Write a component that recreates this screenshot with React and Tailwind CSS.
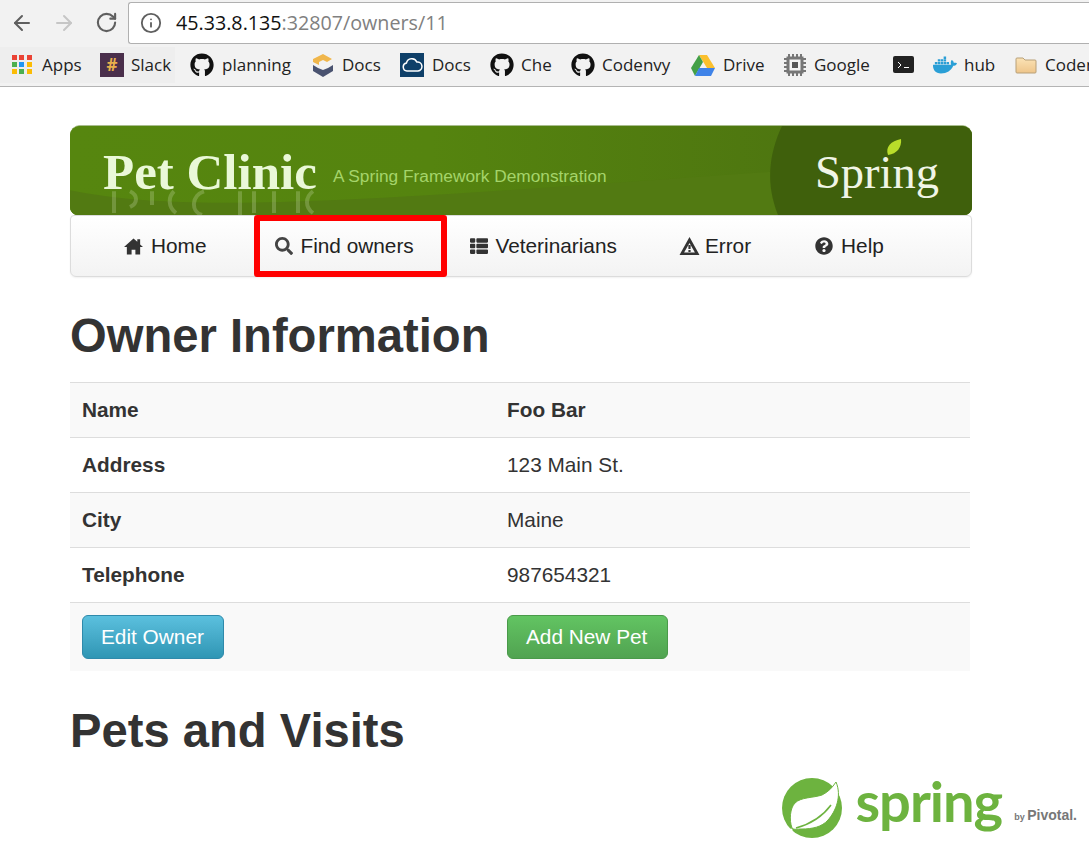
import React from 'react';
import { FaGithub, FaSearch, FaThList, FaQuestionCircle, FaDocker } from 'react-icons/fa';
import { ArrowLeft, ArrowRight, RotateCw, Info } from 'lucide-react';

function AppsIcon() {
  const colors = ['#ea4335', '#ea4335', '#ea4335', '#4caf50', '#2196f3', '#fbbc05', '#fbbc05', '#4caf50', '#fbbc05'];
  return (
    <div className="grid grid-cols-3 gap-[2px] w-[20px] h-[20px]">
      {colors.map((c, i) => <div key={i} className="w-[5px] h-[5px]" style={{ backgroundColor: c }} />)}
    </div>
  );
}

function DocsCube() {
  return (
    <svg width="22" height="24" viewBox="0 0 22 24">
      <path d="M11 1l9 5-5 3-4-2-4 2v3L1 9V6z" fill="#f0b64b" />
      <path d="M1 12l5 3 5 2 5-2 5-3v6l-10 6-10-6z" fill="#4a5370" />
    </svg>
  );
}

function CloudSquare() {
  return (
    <div className="w-[24px] h-[24px] bg-[#0f4069] flex items-center justify-center">
      <svg width="21" height="14" viewBox="0 0 21 14" fill="none" stroke="white" strokeWidth="1.5">
        <path d="M5 13a4 4 0 0 1-.6-7.9A5.5 5.5 0 0 1 14.8 4 4.5 4.5 0 0 1 16 13z" />
      </svg>
    </div>
  );
}

function DriveIcon() {
  return (
    <svg width="24" height="22" viewBox="0 0 24 22">
      <path d="M8 1h8l8 13h-8z" fill="#fbc02d" />
      <path d="M8 1l4 7-8 14-4-8z" fill="#43a047" />
      <path d="M8 14h16l-4 8H4z" fill="#3f83e8" />
    </svg>
  );
}

function ChipIcon() {
  return (
    <svg width="24" height="24" viewBox="0 0 24 24">
      <path d="M6 1v3M10 1v3M14 1v3M18 1v3M6 20v3M10 20v3M14 20v3M18 20v3M1 6h3M1 10h3M1 14h3M1 18h3M20 6h3M20 10h3M20 14h3M20 18h3" stroke="#777" strokeWidth="2" />
      <rect x="5" y="5" width="14" height="14" fill="none" stroke="#777" strokeWidth="3" />
      <rect x="9" y="9" width="6" height="6" fill="#555" />
    </svg>
  );
}

function TerminalIcon() {
  return (
    <div className="w-[21px] h-[17px] bg-[#222] rounded-[2px] flex items-center justify-center">
      <svg width="13" height="8" viewBox="0 0 13 8" fill="none" stroke="white" strokeWidth="1">
        <path d="M1 1l3 3-3 3M7 6.5h5" />
      </svg>
    </div>
  );
}

function FolderIcon() {
  return (
    <svg width="22" height="18" viewBox="0 0 22 18">
      <defs>
        <linearGradient id="folder" x1="0" y1="0" x2="0" y2="1">
          <stop offset="0" stopColor="#fbe3b6" />
          <stop offset="1" stopColor="#eec58a" />
        </linearGradient>
      </defs>
      <path d="M1 3a1 1 0 0 1 1-1h6l2 2h10a1 1 0 0 1 1 1v11a1 1 0 0 1-1 1H2a1 1 0 0 1-1-1z" fill="url(#folder)" stroke="#b8a078" />
    </svg>
  );
}

const gh = <FaGithub className="text-[24px] text-[#111]" />;

const bookmarks = [
  { w: 'w-[100px] pl-[12px]', gap: 'gap-[10px]', icon: <AppsIcon />, label: 'Apps', bg: 'bg-[#eeeeee]' },
  { w: 'w-[75px] mr-[15px]', gap: 'gap-[7px]', icon: <div className="w-[24px] h-[24px] bg-[#4a2f4b] text-[#e8b04c] text-[17px] font-bold leading-[24px] text-center">#</div>, label: 'Slack', bg: 'bg-[#eeeeee]' },
  { w: 'w-[122px]', gap: 'gap-[8px]', icon: gh, label: 'planning' },
  { w: 'w-[88px]', gap: 'gap-[8px]', icon: <DocsCube />, label: 'Docs' },
  { w: 'w-[90px]', gap: 'gap-[8px]', icon: <CloudSquare />, label: 'Docs' },
  { w: 'w-[81px]', gap: 'gap-[7px]', icon: gh, label: 'Che' },
  { w: 'w-[120px]', gap: 'gap-[7px]', icon: gh, label: 'Codenvy' },
  { w: 'w-[92px]', gap: 'gap-[8px]', icon: <DriveIcon />, label: 'Drive' },
  { w: 'w-[110px]', gap: 'gap-[7px]', icon: <ChipIcon />, label: 'Google' },
  { w: 'w-[40px]', gap: '', icon: <TerminalIcon />, label: '' },
  { w: 'w-[82px]', gap: 'gap-[7px]', icon: <FaDocker className="text-[24px] text-[#2a9fd6]" />, label: 'hub' },
  { w: 'w-[100px]', gap: 'gap-[8px]', icon: <FolderIcon />, label: 'Codenvy' },
];

function Browser() {
  return (
    <div className="bg-[#f2f2f2] border-b border-[#b4b4b4] font-['Open_Sans',sans-serif]">
      <div className="h-[45px] flex items-center">
        <ArrowLeft className="ml-[10px] w-[24px] h-[24px] text-[#5f5f5f]" strokeWidth={2} />
        <ArrowRight className="ml-[18px] w-[24px] h-[24px] text-[#c6c6c6]" strokeWidth={2} />
        <RotateCw className="ml-[19px] w-[23px] h-[23px] text-[#5f5f5f]" strokeWidth={2.2} />
        <div className="ml-[10px] flex-1 h-[42px] bg-white border border-r-0 border-[#b0b0b0] rounded-l-[3px] flex items-center text-[19.7px]">
          <Info className="ml-[11px] w-[22px] h-[22px] text-[#5f5f5f]" strokeWidth={2} />
          <span className="ml-[14px] text-[#111]">45.33.8.135</span>
          <span className="text-[#808080]">:32807/owners/11</span>
        </div>
      </div>
      <div className="h-[41px] pb-[2px] flex items-center overflow-hidden text-[17px] text-[#222] whitespace-nowrap">
        {bookmarks.map((b, i) => (
          <div key={i} className={`flex items-center shrink-0 h-[36px] ${b.w} ${b.gap} ${b.bg || ''}`}>
            {b.icon}
            {b.label && <span>{b.label}</span>}
          </div>
        ))}
      </div>
    </div>
  );
}

function Banner() {
  return (
    <div className="relative h-[90px] rounded-t-[10px] rounded-b-[8px] overflow-hidden border-t border-[#a9bd8e] bg-[#55850f] flex items-start">
      <svg className="absolute inset-0 w-full h-full" viewBox="0 0 902 90" preserveAspectRatio="none">
        <defs>
          <linearGradient id="bannerBase" x1="0" y1="0" x2="1" y2="0">
            <stop offset="0" stopColor="#56860f" />
            <stop offset="0.4" stopColor="#55840f" />
            <stop offset="0.8" stopColor="#4e7610" />
          </linearGradient>
        </defs>
        <rect width="902" height="90" fill="url(#bannerBase)" />
        <path d="M0 65C120 90 300 75 720 45V90H0z" fill="#527a12" />
        {/* faint reflection under the title */}
        <g stroke="#eaf8d8" strokeOpacity="0.22" strokeWidth="4" fill="none">
          <path d="M44 66v22M60 66c8 4 8 12 0 16M82 66v14M104 66c-6 6-6 16 2 22M134 66c-12 4-14 20-2 24M170 66v24M184 66v22M204 66v22M228 66v22M243 66c-8 6-8 16 0 22" />
        </g>
        <path d="M712 0h190v90H708C696 60 698 30 712 0z" fill="#3f600c" />
      </svg>
      <div className="relative ml-[33px] mt-[14px] flex items-start">
        <div className="font-['Liberation_Serif',serif] font-bold text-[51px] leading-[64px] text-[#eaf8d8]">Pet Clinic</div>
        <div className="ml-[16px] mt-[24px] font-['Liberation_Sans',sans-serif] text-[17.3px] text-[#a5d46a]">A Spring Framework Demonstration</div>
      </div>
      <div className="absolute right-[33px] top-[15px] font-['Liberation_Serif',serif] text-[46.5px] leading-[64px] text-[#f0f5e6]">Spring</div>
      <svg className="absolute left-[815px] top-[12px]" width="18" height="18" viewBox="0 0 18 18">
        <path d="M3 17C0 9 6 3 16 1c1 8-4 15-13 16z" fill="#b9dd2a" />
      </svg>
    </div>
  );
}

function HomeIcon() {
  return (
    <svg width="19" height="18" viewBox="0 0 20 18" fill="#333">
      <path d="M10 1L0 10h3v8h5v-5h4v5h5v-8h3l-3-2.7V2h-3v2.6z" />
    </svg>
  );
}

function WarningIcon() {
  return (
    <svg width="21" height="18" viewBox="0 0 20 18">
      <path fillRule="evenodd" d="M10 0l10 18H0zM10 6L4.6 15.5h10.8z" fill="#333" />
      <path d="M8.9 8h2.2v4H8.9zM8.9 13h2.2v2H8.9z" fill="#333" />
    </svg>
  );
}

function NavItem({ icon, label, className }) {
  return (
    <div className={`flex items-center text-[20.8px] text-[#222] ${className}`}>
      {icon}
      <span>{label}</span>
    </div>
  );
}

function Nav() {
  return (
    <div className="h-[62px] -mb-px rounded-b-[6px] rounded-t-[4px] border border-[#dcdcdc] bg-gradient-to-b from-white to-[#f3f3f3] flex items-stretch shadow-[0_1px_2px_rgba(0,0,0,0.06)]">
      <NavItem className="ml-[53px] gap-[8px]" icon={<HomeIcon />} label="Home" />
      <NavItem
        className="ml-[48px] -my-px w-[193px] gap-[7px] pl-[15px] border-[6px] border-[#ff0000] rounded-[3px]"
        icon={<FaSearch className="text-[18px] text-[#444]" />}
        label="Find owners"
      />
      <NavItem className="ml-[23px] gap-[7px]" icon={<FaThList className="text-[18px] text-[#333]" />} label="Veterinarians" />
      <NavItem className="ml-[62px] gap-[5px]" icon={<WarningIcon />} label="Error" />
      <NavItem className="ml-[64px] gap-[8px]" icon={<FaQuestionCircle className="text-[18px] text-[#333]" />} label="Help" />
    </div>
  );
}

function Row({ label, value, odd, strong }) {
  return (
    <tr className={`border-t border-[#dddddd] h-[55px] ${odd ? 'bg-[#f9f9f9]' : ''}`}>
      <th className="text-left font-bold pl-[12px] w-[425px]">{label}</th>
      <td className={`pl-[12px] ${strong ? 'font-bold' : ''}`}>{value}</td>
    </tr>
  );
}

function LeafLogo() {
  return (
    <svg width="60" height="60" viewBox="0 0 60 60" className="overflow-visible">
      <circle cx="30" cy="30" r="30" fill="#6db33f" />
      <path d="M54 4C50 10 46 14 40 17 31 20 19 19 13 25 8 30 7 42 10 50 12 52 14 51 20 51 30 51 40 49 46 42 54 33 60 18 54 4z" fill="white" stroke="#6db33f" strokeWidth="1" />
      <path d="M14 50C25 47 38 42 49 27" fill="none" stroke="#6db33f" strokeWidth="1.5" />
      <circle cx="9" cy="52" r="1.6" fill="white" />
    </svg>
  );
}

export default function App() {
  return (
    <div className="w-[1089px] h-[845px] overflow-hidden bg-white font-['Liberation_Sans',sans-serif] text-[#333333]">
      <Browser />
      <div className="pl-[70px] pr-[117px] pt-[38px]">
        <Banner />
        <Nav />
        <h2 className="mt-[30px] text-[47.2px] leading-[60px] font-bold">Owner Information</h2>
        <table className="mt-[16px] w-[900px] text-[20.8px] border-collapse">
          <tbody>
            <Row label="Name" value="Foo Bar" odd strong />
            <Row label="Address" value="123 Main St." />
            <Row label="City" value="Maine" odd />
            <Row label="Telephone" value="987654321" />
            <tr className="border-t border-[#dddddd] h-[68px] bg-[#f9f9f9]">
              <td className="pl-[12px]">
                <button className="h-[44px] w-[142px] pl-[18px] text-left rounded-[6px] border border-[#2f8aab] bg-gradient-to-b from-[#5bc0de] to-[#2f96b4] text-white">Edit Owner</button>
              </td>
              <td className="pl-[12px]">
                <button className="h-[44px] w-[161px] pl-[18px] text-left rounded-[6px] border border-[#4a9a4a] bg-gradient-to-b from-[#62c462] to-[#51a351] text-white">Add New Pet</button>
              </td>
            </tr>
          </tbody>
        </table>
        <h2 className="mt-[30px] text-[47.2px] leading-[60px] font-bold">Pets and Visits</h2>
      </div>
      <div className="flex items-end justify-end pr-[12px] mt-[10px]">
        <LeafLogo />
        <div className="ml-[14px] mb-[7px] font-['Lato',sans-serif] font-bold text-[#6db33f] text-[56px] leading-[60px] tracking-[-1px]">spring</div>
        <div className="ml-[12px] mb-[11px] font-bold text-[#777] whitespace-nowrap">
          <span className="text-[9px]">by </span>
          <span className="text-[14px]">Pivotal.</span>
        </div>
      </div>
    </div>
  );
}
